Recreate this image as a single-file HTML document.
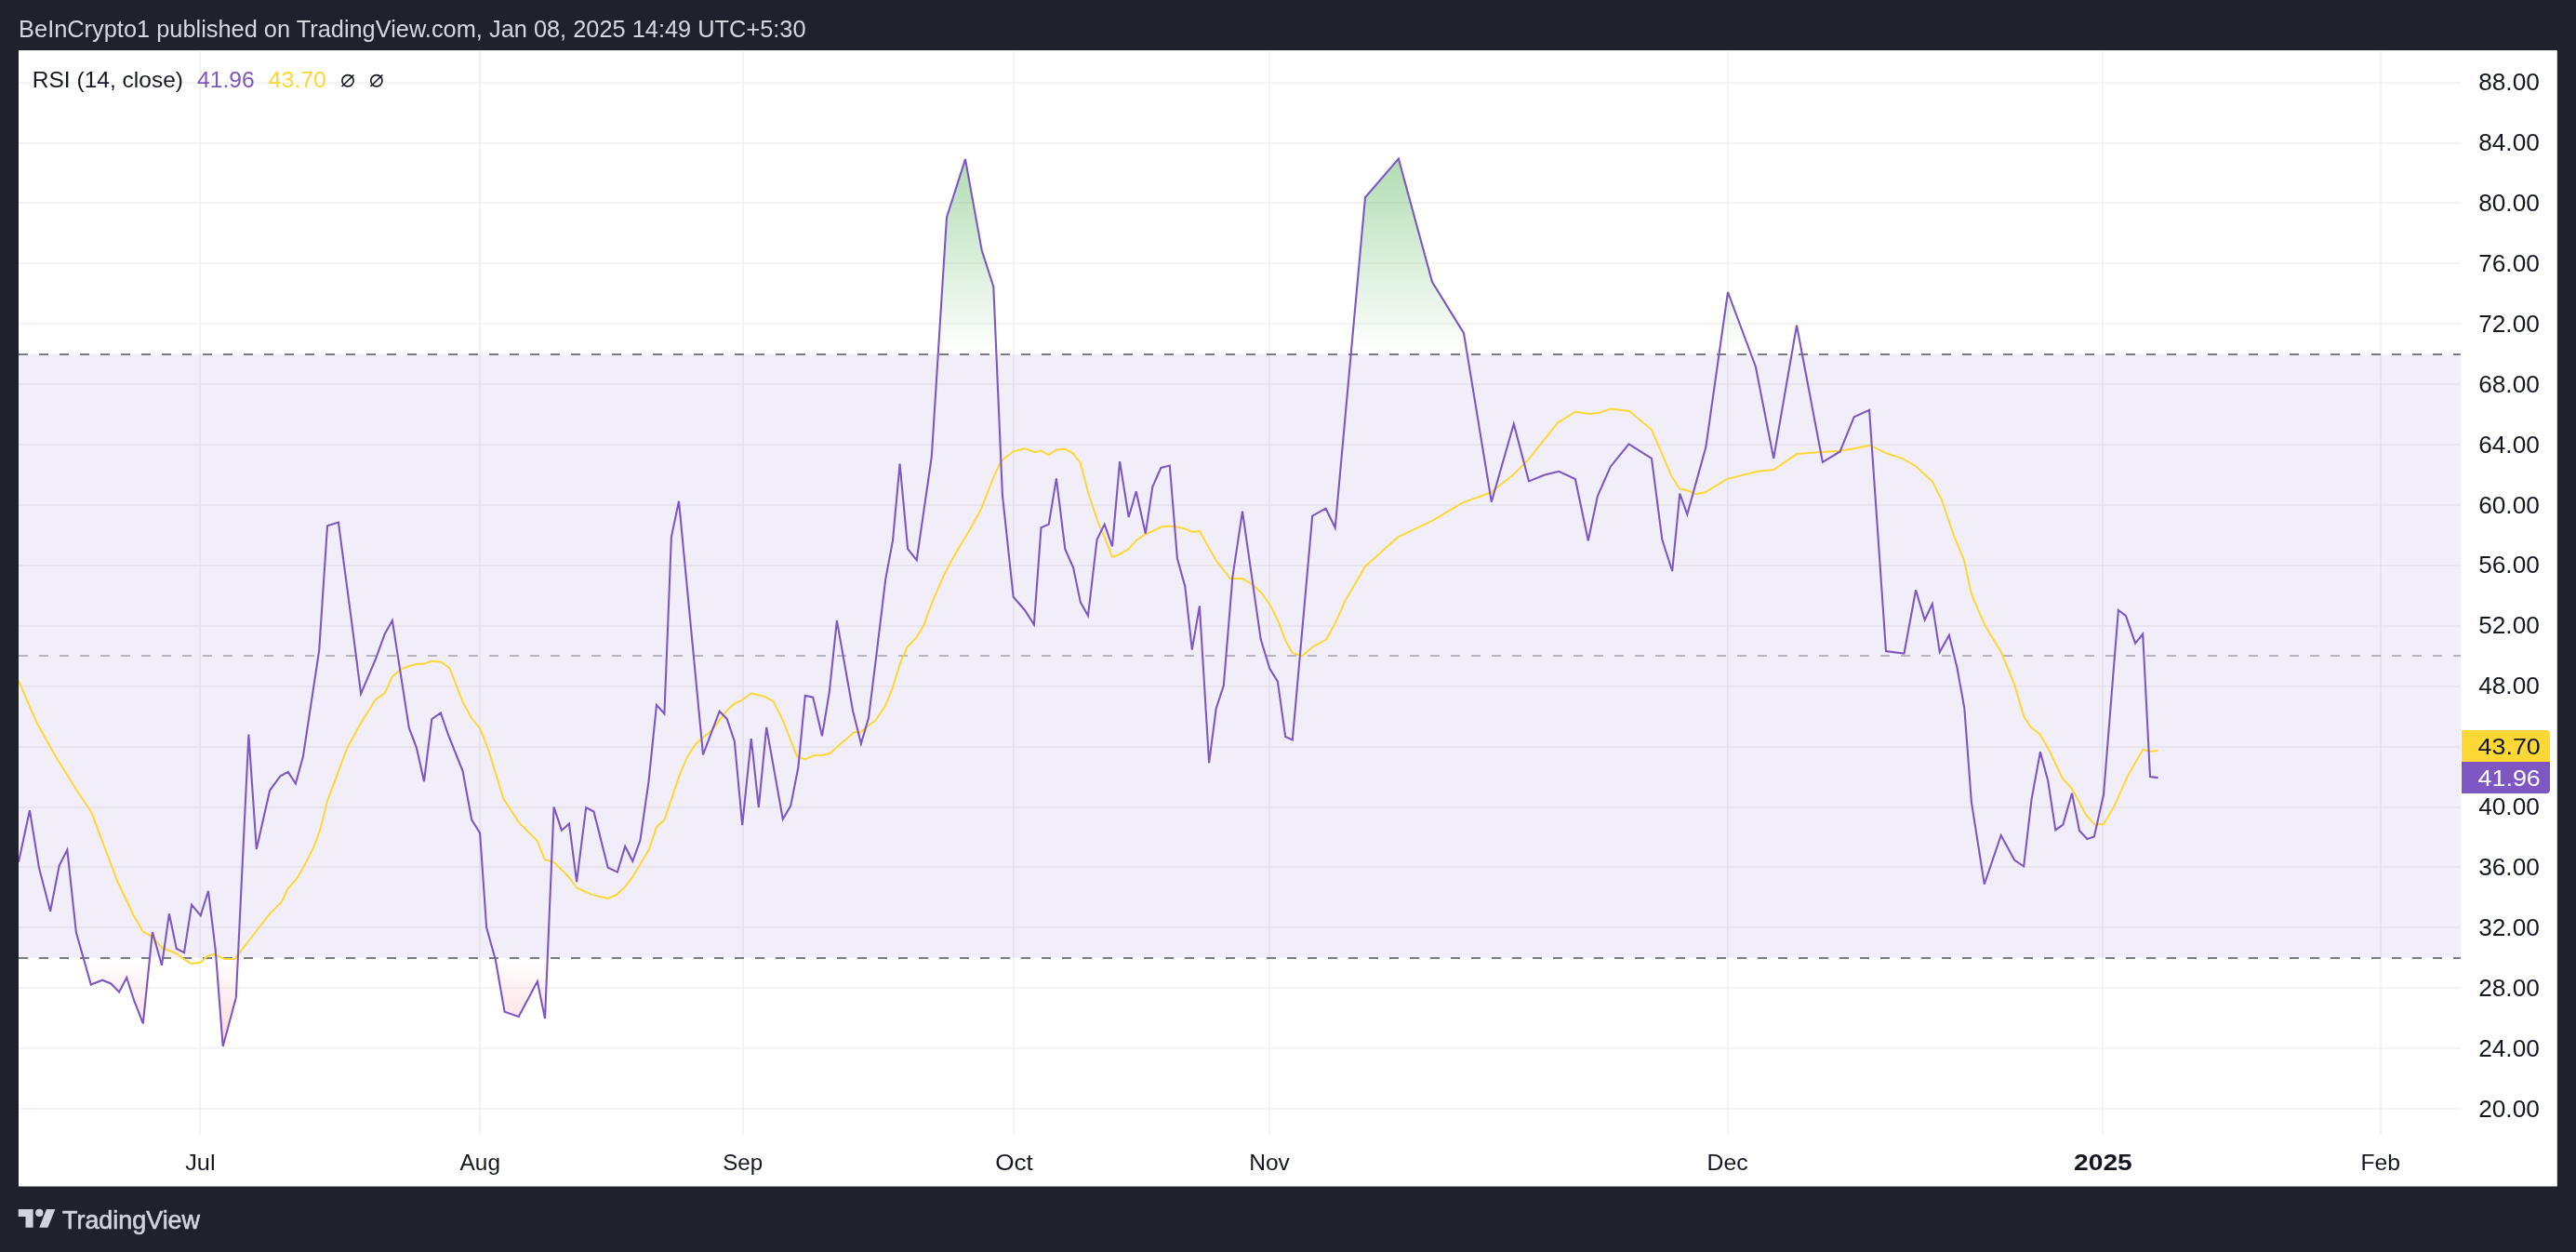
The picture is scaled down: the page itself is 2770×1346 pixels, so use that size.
<!DOCTYPE html>
<html><head><meta charset="utf-8">
<style>
html,body{margin:0;padding:0;}
body{width:2770px;height:1346px;background:#1f222d;position:relative;overflow:hidden;}
svg{position:absolute;left:0;top:0;font-family:"Liberation Sans",sans-serif;will-change:transform;}
</style></head><body>
<svg width="2770" height="1346" viewBox="0 0 2770 1346">
<defs>
<linearGradient id="gg" gradientUnits="userSpaceOnUse" x1="0" y1="-106.0" x2="0" y2="380.8">
<stop offset="0" stop-color="#4caf50" stop-opacity="1"/><stop offset="1" stop-color="#4caf50" stop-opacity="0"/></linearGradient>
<linearGradient id="rg" gradientUnits="userSpaceOnUse" x1="0" y1="1029.8" x2="0" y2="1516.5">
<stop offset="0" stop-color="#f23645" stop-opacity="0"/><stop offset="1" stop-color="#f23645" stop-opacity="1"/></linearGradient>
<clipPath id="cTop"><rect x="20" y="54" width="2626" height="326.8"/></clipPath>
<clipPath id="cBot"><rect x="20" y="1029.8" width="2626" height="190.2"/></clipPath>
<clipPath id="cPlot"><rect x="20" y="54" width="2626" height="1166"/></clipPath>
</defs>
<rect x="20" y="54.1" width="2729.8" height="1221.4" fill="#ffffff"/>
<path d="M20 1192H2646M20 1127H2646M20 1062H2646M20 997H2646M20 932H2646M20 868H2646M20 803H2646M20 738H2646M20 673H2646M20 608H2646M20 543H2646M20 478H2646M20 413H2646M20 348H2646M20 283H2646M20 218H2646M20 154H2646M20 89H2646M215 54V1220M516 54V1220M799 54V1220M1090 54V1220M1365 54V1220M1858 54V1220M2261 54V1220M2560 54V1220" stroke="#eff1f0" stroke-width="1.6" fill="none"/>
<rect x="20" y="380.8" width="2626" height="649.0" fill="#7e57c2" fill-opacity="0.1"/>
<polygon points="20.0,381.0 20.0,926.8 31.9,871.2 42.0,933.1 54.1,979.8 63.7,930.6 72.3,913.7 81.9,1002.5 97.8,1058.5 110.2,1053.7 119.3,1057.5 128.1,1066.4 136.2,1051.0 144.2,1075.7 153.8,1100.4 163.9,1002.0 174.0,1037.8 181.9,982.3 189.7,1019.7 198.0,1024.2 206.1,972.7 215.7,984.3 224.0,957.8 231.6,1020.2 239.7,1124.9 253.8,1072.4 267.4,789.5 275.8,912.9 290.1,849.8 301.5,834.2 309.8,829.9 317.9,842.5 326.0,812.7 343.2,699.1 352.0,565.3 363.9,561.6 378.5,671.4 388.1,745.8 403.7,709.2 413.8,681.5 421.9,667.1 439.8,782.4 447.9,803.9 456.0,840.0 464.3,773.1 473.9,766.5 482.0,790.0 497.6,829.1 507.2,881.3 516.1,895.7 523.1,997.0 532.8,1031.8 542.6,1087.8 557.7,1092.9 577.9,1055.0 586.0,1095.1 595.6,867.5 603.9,892.7 612.0,885.6 620.1,948.2 630.2,868.2 638.5,872.5 653.7,932.8 663.9,937.6 672.2,909.9 680.3,925.8 688.4,903.5 697.5,840.4 706.0,757.9 714.4,767.3 721.9,577.4 730.0,538.8 756.0,811.4 773.7,764.7 781.8,773.1 789.8,796.6 798.2,887.1 807.8,794.0 815.8,868.2 824.2,781.9 841.8,880.8 850.2,866.4 858.3,825.3 865.8,747.8 874.2,749.6 884.0,791.3 891.8,744.0 899.9,667.1 917.1,764.2 925.9,799.5 934.0,771.8 942.8,701.1 952.2,622.9 960.0,581.2 967.6,498.7 976.1,590.1 985.7,602.2 1001.8,491.0 1018.0,233.7 1038.0,171.1 1055.7,269.0 1068.3,308.1 1077.9,532.0 1089.7,641.8 1101.8,655.7 1111.9,671.6 1119.5,567.3 1127.8,563.6 1135.9,514.3 1145.3,590.1 1154.1,610.3 1161.9,647.6 1170.0,662.0 1179.6,580.0 1187.7,563.6 1196.0,587.5 1204.1,496.2 1213.7,556.0 1221.7,528.2 1231.8,573.7 1239.4,523.2 1248.3,503.0 1257.8,500.5 1265.9,600.2 1274.3,630.5 1281.8,698.6 1289.9,651.4 1300.1,820.2 1307.7,761.7 1315.8,737.0 1325.4,620.4 1336.0,549.7 1355.7,687.3 1365.3,718.8 1373.9,732.7 1382.2,792.0 1389.8,795.5 1411.2,554.7 1425.6,546.7 1435.7,567.3 1468.0,212.2 1503.9,170.6 1540.0,303.1 1574.0,358.1 1603.8,539.6 1627.8,455.8 1644.0,517.4 1661.1,510.6 1676.3,506.8 1693.9,515.1 1707.8,581.2 1717.9,533.3 1731.8,501.7 1751.5,477.3 1776.0,492.9 1787.3,580.0 1798.2,614.0 1806.3,530.7 1814.3,553.0 1834.3,480.8 1858.0,314.0 1887.8,394.0 1907.2,492.9 1932.0,349.8 1959.9,496.9 1978.6,485.5 1993.7,448.2 2010.1,440.9 2028.0,700.1 2047.5,702.6 2060.1,634.2 2069.7,666.5 2077.8,649.3 2085.8,701.1 2095.9,682.9 2104.3,717.0 2112.3,761.1 2119.9,862.1 2133.8,950.7 2151.7,898.0 2166.1,924.5 2176.2,931.5 2184.5,859.6 2193.9,808.3 2202.2,839.4 2210.3,892.4 2218.4,886.6 2228.0,852.8 2236.0,892.9 2244.4,902.0 2251.9,899.5 2262.0,854.5 2277.9,655.9 2286.0,662.2 2296.1,691.7 2304.2,681.6 2312.0,835.1 2320.6,836.1 2320.6,381.0" fill="url(#gg)" clip-path="url(#cTop)"/>
<polygon points="20.0,1030.0 20.0,926.8 31.9,871.2 42.0,933.1 54.1,979.8 63.7,930.6 72.3,913.7 81.9,1002.5 97.8,1058.5 110.2,1053.7 119.3,1057.5 128.1,1066.4 136.2,1051.0 144.2,1075.7 153.8,1100.4 163.9,1002.0 174.0,1037.8 181.9,982.3 189.7,1019.7 198.0,1024.2 206.1,972.7 215.7,984.3 224.0,957.8 231.6,1020.2 239.7,1124.9 253.8,1072.4 267.4,789.5 275.8,912.9 290.1,849.8 301.5,834.2 309.8,829.9 317.9,842.5 326.0,812.7 343.2,699.1 352.0,565.3 363.9,561.6 378.5,671.4 388.1,745.8 403.7,709.2 413.8,681.5 421.9,667.1 439.8,782.4 447.9,803.9 456.0,840.0 464.3,773.1 473.9,766.5 482.0,790.0 497.6,829.1 507.2,881.3 516.1,895.7 523.1,997.0 532.8,1031.8 542.6,1087.8 557.7,1092.9 577.9,1055.0 586.0,1095.1 595.6,867.5 603.9,892.7 612.0,885.6 620.1,948.2 630.2,868.2 638.5,872.5 653.7,932.8 663.9,937.6 672.2,909.9 680.3,925.8 688.4,903.5 697.5,840.4 706.0,757.9 714.4,767.3 721.9,577.4 730.0,538.8 756.0,811.4 773.7,764.7 781.8,773.1 789.8,796.6 798.2,887.1 807.8,794.0 815.8,868.2 824.2,781.9 841.8,880.8 850.2,866.4 858.3,825.3 865.8,747.8 874.2,749.6 884.0,791.3 891.8,744.0 899.9,667.1 917.1,764.2 925.9,799.5 934.0,771.8 942.8,701.1 952.2,622.9 960.0,581.2 967.6,498.7 976.1,590.1 985.7,602.2 1001.8,491.0 1018.0,233.7 1038.0,171.1 1055.7,269.0 1068.3,308.1 1077.9,532.0 1089.7,641.8 1101.8,655.7 1111.9,671.6 1119.5,567.3 1127.8,563.6 1135.9,514.3 1145.3,590.1 1154.1,610.3 1161.9,647.6 1170.0,662.0 1179.6,580.0 1187.7,563.6 1196.0,587.5 1204.1,496.2 1213.7,556.0 1221.7,528.2 1231.8,573.7 1239.4,523.2 1248.3,503.0 1257.8,500.5 1265.9,600.2 1274.3,630.5 1281.8,698.6 1289.9,651.4 1300.1,820.2 1307.7,761.7 1315.8,737.0 1325.4,620.4 1336.0,549.7 1355.7,687.3 1365.3,718.8 1373.9,732.7 1382.2,792.0 1389.8,795.5 1411.2,554.7 1425.6,546.7 1435.7,567.3 1468.0,212.2 1503.9,170.6 1540.0,303.1 1574.0,358.1 1603.8,539.6 1627.8,455.8 1644.0,517.4 1661.1,510.6 1676.3,506.8 1693.9,515.1 1707.8,581.2 1717.9,533.3 1731.8,501.7 1751.5,477.3 1776.0,492.9 1787.3,580.0 1798.2,614.0 1806.3,530.7 1814.3,553.0 1834.3,480.8 1858.0,314.0 1887.8,394.0 1907.2,492.9 1932.0,349.8 1959.9,496.9 1978.6,485.5 1993.7,448.2 2010.1,440.9 2028.0,700.1 2047.5,702.6 2060.1,634.2 2069.7,666.5 2077.8,649.3 2085.8,701.1 2095.9,682.9 2104.3,717.0 2112.3,761.1 2119.9,862.1 2133.8,950.7 2151.7,898.0 2166.1,924.5 2176.2,931.5 2184.5,859.6 2193.9,808.3 2202.2,839.4 2210.3,892.4 2218.4,886.6 2228.0,852.8 2236.0,892.9 2244.4,902.0 2251.9,899.5 2262.0,854.5 2277.9,655.9 2286.0,662.2 2296.1,691.7 2304.2,681.6 2312.0,835.1 2320.6,836.1 2320.6,1030.0" fill="url(#rg)" clip-path="url(#cBot)"/>
<g stroke-width="2" stroke-dasharray="10 12" fill="none">
<path d="M20 381H2646" stroke="#787b86"/>
<path d="M20 705H2646" stroke="#787b86" stroke-opacity="0.5"/>
<path d="M20 1030H2646" stroke="#787b86"/>
</g>
<g clip-path="url(#cPlot)" fill="none" stroke-linejoin="miter" stroke-miterlimit="4">
<polyline points="20.0,731.9 40.2,778.6 60.4,814.0 83.0,850.5 98.3,873.3 126.1,947.0 143.7,984.3 153.8,1001.7 163.9,1007.0 174.0,1018.9 189.2,1024.7 196.7,1030.3 206.1,1036.1 215.7,1034.6 223.3,1027.7 230.8,1025.7 240.9,1031.0 252.3,1031.0 276.3,1000.0 290.1,982.3 302.8,969.7 309.1,956.1 319.2,944.4 328.0,929.3 338.1,909.1 344.4,891.4 352.0,861.1 373.4,803.9 387.3,778.6 403.7,752.1 413.8,745.1 421.9,727.4 431.5,719.3 441.6,715.5 449.2,713.8 455.5,713.8 464.3,710.7 474.4,711.7 483.3,718.1 497.6,754.7 507.2,772.3 516.1,783.2 524.9,805.1 541.3,858.6 557.7,883.9 577.9,904.1 586.0,924.3 595.6,926.8 612.0,943.2 620.1,954.5 636.0,961.6 653.7,966.0 662.6,962.1 671.5,954.0 680.3,942.7 687.9,930.0 698.0,913.1 706.0,888.9 714.4,881.6 723.2,855.6 730.8,832.9 739.6,812.7 748.4,799.5 766.1,784.4 773.7,774.3 781.3,764.2 790.1,756.2 797.7,752.9 807.8,745.3 822.9,749.1 831.7,754.1 841.8,774.3 857.0,813.2 865.8,816.5 874.7,812.2 883.5,811.9 892.3,810.1 901.2,802.1 918.8,787.0 925.1,787.5 932.7,780.7 941.6,774.3 951.7,759.2 959.2,741.5 968.1,712.5 975.6,695.6 985.7,685.2 993.3,672.1 1002.1,648.1 1013.5,621.6 1021.1,606.5 1031.2,588.8 1042.5,569.9 1055.1,547.2 1067.8,514.3 1076.6,495.4 1089.7,485.3 1101.8,482.3 1113.2,486.1 1119.5,484.6 1127.8,489.1 1135.9,483.5 1145.3,482.8 1153.6,487.1 1161.9,497.9 1170.0,529.5 1180.1,559.8 1187.7,577.4 1196.0,598.9 1204.1,595.9 1213.7,590.1 1221.7,581.2 1230.6,574.9 1239.4,571.1 1248.3,566.6 1257.8,565.6 1265.9,566.6 1274.3,568.6 1282.3,571.9 1290.0,571.1 1307.7,602.7 1322.9,622.1 1336.0,622.1 1348.1,629.2 1356.9,638.0 1366.3,651.4 1374.6,668.3 1382.2,688.5 1389.8,701.9 1399.9,705.4 1412.5,694.8 1426.4,687.3 1436.5,668.3 1446.6,645.6 1468.0,609.0 1486.9,592.1 1503.3,577.4 1540.0,559.8 1572.8,540.3 1603.1,529.5 1627.0,510.6 1643.4,494.1 1675.0,454.6 1693.9,442.7 1709.1,445.0 1719.2,443.7 1731.8,439.4 1752.0,441.9 1776.0,462.1 1797.4,511.8 1806.3,525.7 1813.8,527.0 1823.9,531.3 1834.0,529.0 1856.7,515.1 1889.6,506.8 1907.2,505.0 1932.1,488.1 1957.9,486.0 1978.6,484.8 1993.2,482.3 2010.9,478.7 2028.5,487.3 2046.2,493.1 2060.1,501.2 2077.8,517.6 2087.9,537.3 2101.7,577.7 2111.8,601.7 2119.9,638.7 2134.6,672.8 2152.2,701.8 2166.1,735.9 2176.2,770.0 2183.8,781.8 2193.9,789.7 2202.7,805.3 2217.9,836.9 2228.5,848.7 2243.1,876.0 2252.7,886.6 2262.0,886.1 2273.4,866.7 2287.3,835.6 2304.2,805.8 2312.0,807.8 2320.6,807.1" stroke="#fdd835" stroke-width="2"/>
<polyline points="20.0,926.8 31.9,871.2 42.0,933.1 54.1,979.8 63.7,930.6 72.3,913.7 81.9,1002.5 97.8,1058.5 110.2,1053.7 119.3,1057.5 128.1,1066.4 136.2,1051.0 144.2,1075.7 153.8,1100.4 163.9,1002.0 174.0,1037.8 181.9,982.3 189.7,1019.7 198.0,1024.2 206.1,972.7 215.7,984.3 224.0,957.8 231.6,1020.2 239.7,1124.9 253.8,1072.4 267.4,789.5 275.8,912.9 290.1,849.8 301.5,834.2 309.8,829.9 317.9,842.5 326.0,812.7 343.2,699.1 352.0,565.3 363.9,561.6 378.5,671.4 388.1,745.8 403.7,709.2 413.8,681.5 421.9,667.1 439.8,782.4 447.9,803.9 456.0,840.0 464.3,773.1 473.9,766.5 482.0,790.0 497.6,829.1 507.2,881.3 516.1,895.7 523.1,997.0 532.8,1031.8 542.6,1087.8 557.7,1092.9 577.9,1055.0 586.0,1095.1 595.6,867.5 603.9,892.7 612.0,885.6 620.1,948.2 630.2,868.2 638.5,872.5 653.7,932.8 663.9,937.6 672.2,909.9 680.3,925.8 688.4,903.5 697.5,840.4 706.0,757.9 714.4,767.3 721.9,577.4 730.0,538.8 756.0,811.4 773.7,764.7 781.8,773.1 789.8,796.6 798.2,887.1 807.8,794.0 815.8,868.2 824.2,781.9 841.8,880.8 850.2,866.4 858.3,825.3 865.8,747.8 874.2,749.6 884.0,791.3 891.8,744.0 899.9,667.1 917.1,764.2 925.9,799.5 934.0,771.8 942.8,701.1 952.2,622.9 960.0,581.2 967.6,498.7 976.1,590.1 985.7,602.2 1001.8,491.0 1018.0,233.7 1038.0,171.1 1055.7,269.0 1068.3,308.1 1077.9,532.0 1089.7,641.8 1101.8,655.7 1111.9,671.6 1119.5,567.3 1127.8,563.6 1135.9,514.3 1145.3,590.1 1154.1,610.3 1161.9,647.6 1170.0,662.0 1179.6,580.0 1187.7,563.6 1196.0,587.5 1204.1,496.2 1213.7,556.0 1221.7,528.2 1231.8,573.7 1239.4,523.2 1248.3,503.0 1257.8,500.5 1265.9,600.2 1274.3,630.5 1281.8,698.6 1289.9,651.4 1300.1,820.2 1307.7,761.7 1315.8,737.0 1325.4,620.4 1336.0,549.7 1355.7,687.3 1365.3,718.8 1373.9,732.7 1382.2,792.0 1389.8,795.5 1411.2,554.7 1425.6,546.7 1435.7,567.3 1468.0,212.2 1503.9,170.6 1540.0,303.1 1574.0,358.1 1603.8,539.6 1627.8,455.8 1644.0,517.4 1661.1,510.6 1676.3,506.8 1693.9,515.1 1707.8,581.2 1717.9,533.3 1731.8,501.7 1751.5,477.3 1776.0,492.9 1787.3,580.0 1798.2,614.0 1806.3,530.7 1814.3,553.0 1834.3,480.8 1858.0,314.0 1887.8,394.0 1907.2,492.9 1932.0,349.8 1959.9,496.9 1978.6,485.5 1993.7,448.2 2010.1,440.9 2028.0,700.1 2047.5,702.6 2060.1,634.2 2069.7,666.5 2077.8,649.3 2085.8,701.1 2095.9,682.9 2104.3,717.0 2112.3,761.1 2119.9,862.1 2133.8,950.7 2151.7,898.0 2166.1,924.5 2176.2,931.5 2184.5,859.6 2193.9,808.3 2202.2,839.4 2210.3,892.4 2218.4,886.6 2228.0,852.8 2236.0,892.9 2244.4,902.0 2251.9,899.5 2262.0,854.5 2277.9,655.9 2286.0,662.2 2296.1,691.7 2304.2,681.6 2312.0,835.1 2320.6,836.1" stroke="#7e57c2" stroke-width="2.1"/>
</g>
<g><text x="2730.80" y="1200.55" font-size="25" fill="#131722" text-anchor="end" textLength="65.60" lengthAdjust="spacingAndGlyphs">20.00</text><text x="2730.80" y="1135.65" font-size="25" fill="#131722" text-anchor="end" textLength="65.60" lengthAdjust="spacingAndGlyphs">24.00</text><text x="2730.80" y="1070.75" font-size="25" fill="#131722" text-anchor="end" textLength="65.60" lengthAdjust="spacingAndGlyphs">28.00</text><text x="2730.80" y="1005.85" font-size="25" fill="#131722" text-anchor="end" textLength="65.60" lengthAdjust="spacingAndGlyphs">32.00</text><text x="2730.80" y="940.95" font-size="25" fill="#131722" text-anchor="end" textLength="65.60" lengthAdjust="spacingAndGlyphs">36.00</text><text x="2730.80" y="876.05" font-size="25" fill="#131722" text-anchor="end" textLength="65.60" lengthAdjust="spacingAndGlyphs">40.00</text><text x="2730.80" y="811.15" font-size="25" fill="#131722" text-anchor="end" textLength="63.60" lengthAdjust="spacingAndGlyphs">44.00</text><text x="2730.80" y="746.25" font-size="25" fill="#131722" text-anchor="end" textLength="65.60" lengthAdjust="spacingAndGlyphs">48.00</text><text x="2730.80" y="681.35" font-size="25" fill="#131722" text-anchor="end" textLength="65.60" lengthAdjust="spacingAndGlyphs">52.00</text><text x="2730.80" y="616.45" font-size="25" fill="#131722" text-anchor="end" textLength="65.60" lengthAdjust="spacingAndGlyphs">56.00</text><text x="2730.80" y="551.55" font-size="25" fill="#131722" text-anchor="end" textLength="65.60" lengthAdjust="spacingAndGlyphs">60.00</text><text x="2730.80" y="486.65" font-size="25" fill="#131722" text-anchor="end" textLength="65.60" lengthAdjust="spacingAndGlyphs">64.00</text><text x="2730.80" y="421.75" font-size="25" fill="#131722" text-anchor="end" textLength="65.60" lengthAdjust="spacingAndGlyphs">68.00</text><text x="2730.80" y="356.85" font-size="25" fill="#131722" text-anchor="end" textLength="65.60" lengthAdjust="spacingAndGlyphs">72.00</text><text x="2730.80" y="291.95" font-size="25" fill="#131722" text-anchor="end" textLength="65.60" lengthAdjust="spacingAndGlyphs">76.00</text><text x="2730.80" y="227.05" font-size="25" fill="#131722" text-anchor="end" textLength="65.60" lengthAdjust="spacingAndGlyphs">80.00</text><text x="2730.80" y="162.15" font-size="25" fill="#131722" text-anchor="end" textLength="65.60" lengthAdjust="spacingAndGlyphs">84.00</text><text x="2730.80" y="97.25" font-size="25" fill="#131722" text-anchor="end" textLength="65.60" lengthAdjust="spacingAndGlyphs">88.00</text></g>
<g><text x="215.40" y="1257.80" font-size="24.5" fill="#131722" text-anchor="middle" textLength="32.40" lengthAdjust="spacingAndGlyphs">Jul</text><text x="516.30" y="1257.80" font-size="24.5" fill="#131722" text-anchor="middle" textLength="43.40" lengthAdjust="spacingAndGlyphs">Aug</text><text x="798.70" y="1257.80" font-size="24.5" fill="#131722" text-anchor="middle" textLength="43.00" lengthAdjust="spacingAndGlyphs">Sep</text><text x="1090.50" y="1257.80" font-size="24.5" fill="#131722" text-anchor="middle" textLength="40.60" lengthAdjust="spacingAndGlyphs">Oct</text><text x="1365.00" y="1257.80" font-size="24.5" fill="#131722" text-anchor="middle" textLength="43.60" lengthAdjust="spacingAndGlyphs">Nov</text><text x="1857.60" y="1257.80" font-size="24.5" fill="#131722" text-anchor="middle" textLength="44.00" lengthAdjust="spacingAndGlyphs">Dec</text><text x="2261.40" y="1257.80" font-size="24.5" fill="#131722" text-anchor="middle" textLength="62.80" lengthAdjust="spacingAndGlyphs" font-weight="bold">2025</text><text x="2559.70" y="1257.80" font-size="24.5" fill="#131722" text-anchor="middle" textLength="42.60" lengthAdjust="spacingAndGlyphs">Feb</text></g>
<path d="M2647 785 h91 a4 4 0 0 1 4 4 v30 h-95 z" fill="#fdd835"/>
<path d="M2647 819 h95 v30 a4 4 0 0 1 -4 4 h-91 z" fill="#7e57c2"/>
<text x="2731.80" y="810.50" font-size="24" fill="#131722" text-anchor="end" textLength="67.20" lengthAdjust="spacingAndGlyphs">43.70</text>
<text x="2731.80" y="844.50" font-size="24" fill="#ffffff" text-anchor="end" textLength="67.20" lengthAdjust="spacingAndGlyphs">41.96</text>
<text x="20.10" y="39.80" font-size="26" fill="#d6d8e0" text-anchor="start" textLength="846.50" lengthAdjust="spacingAndGlyphs">BeInCrypto1 published on TradingView.com, Jan 08, 2025 14:49 UTC+5:30</text>
<text x="34.80" y="93.90" font-size="24" fill="#131722" text-anchor="start" textLength="162.20" lengthAdjust="spacingAndGlyphs">RSI (14, close)</text>
<text x="212.00" y="93.90" font-size="24" fill="#7e57c2" text-anchor="start" textLength="61.60" lengthAdjust="spacingAndGlyphs">41.96</text>
<text x="288.60" y="93.90" font-size="24" fill="#fdd835" text-anchor="start" textLength="62.40" lengthAdjust="spacingAndGlyphs">43.70</text>
<g stroke="#131722" stroke-width="1.6" fill="none">
<circle cx="374" cy="86.75" r="6.1"/><path d="M367.6 93 L380.4 80.5"/>
<circle cx="404.85" cy="86.75" r="6.1"/><path d="M398.45 93 L411.25 80.5"/>
</g>
<g fill="#d1d4dc">
<path d="M19.8 1300 H35.6 V1319.7 H27.5 V1308 H19.8 Z"/>
<circle cx="42.3" cy="1303.9" r="4.1"/>
<path d="M50 1300 H59.4 L51.4 1319.7 H42.3 Z"/>
</g>
<text x="67.00" y="1320.70" font-size="27" fill="#d1d4dc" text-anchor="start" textLength="148.00" lengthAdjust="spacingAndGlyphs" stroke="#d1d4dc" stroke-width="0.6">TradingView</text>
</svg>
</body></html>
